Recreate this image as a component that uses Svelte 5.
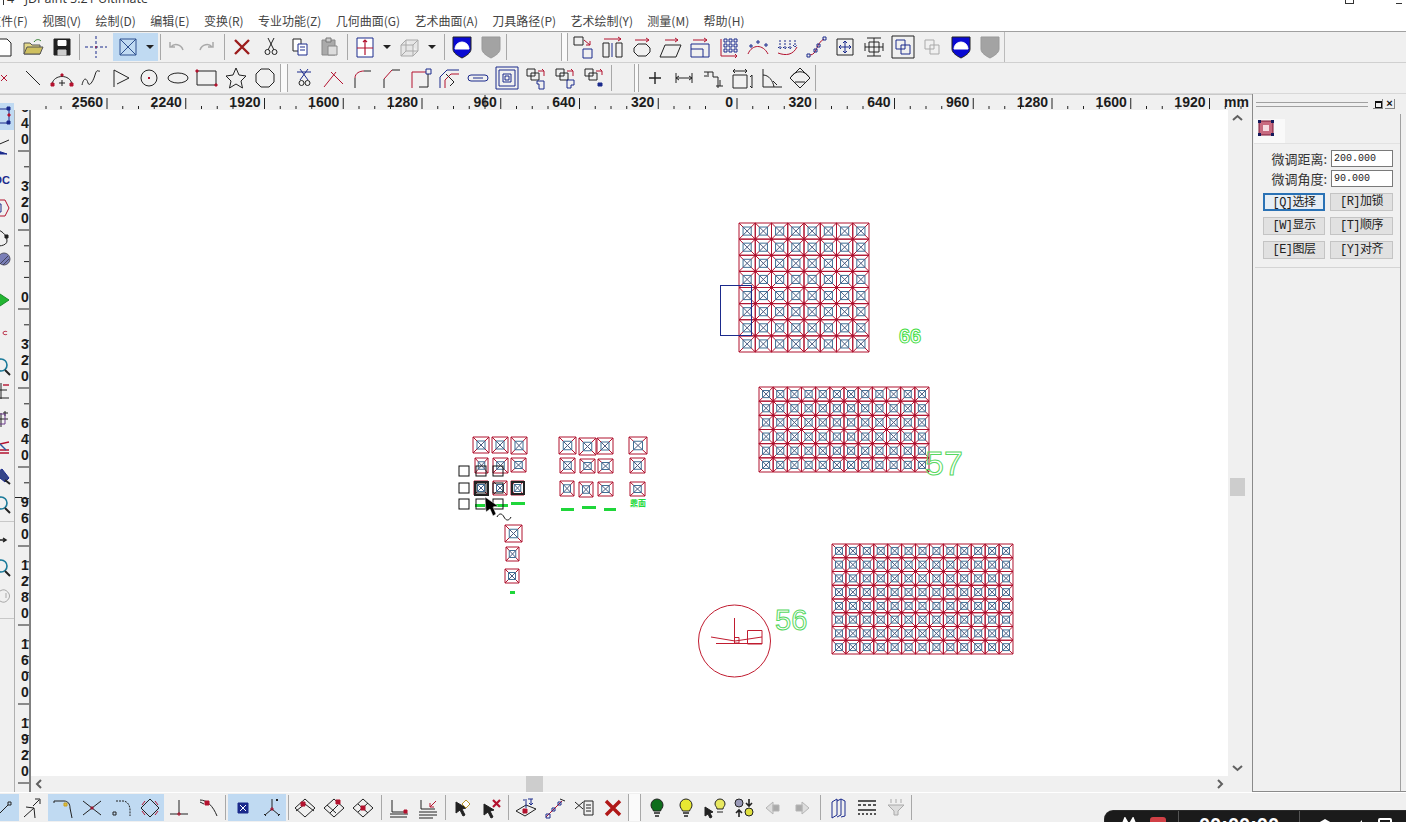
<script>
  const N = '#1b2a8c', R = '#b3122f', K = '#222', G = '#a9a9a9', B = '#2d4f8e';

  // [stroke, path, fill?, strokeWidth?], drawn in a 24x24 box
  const icons = {
    doc: [[K, 'M5 4h10l4 4v13H5z', '#fff']],
    open: [['#555', 'M3 8h6l2 2h8v9H3z', '#e4d98a'], ['#555', 'M3 19l3-7h16l-3 7z', '#cfc060'], ['#2a7a2a', 'M13 7c2-3 5-3 7-1']],
    save: [[K, 'M4 4h16v16H4z', K], ['#fff', 'M8 5.5h8v5H8z', '#fff'], ['#ccc', 'M8 15h8v5H8z', '#ccc']],
    cross: [[N, 'M1 12h22M12 1v22', 'none', 1, '3 2'], [R, 'M11 12h2']],
    xbox: [[B, 'M4 4h16v16H4zM4 4l16 16M20 4L4 20']],
    undo: [[G, 'M5 7v5h5M6 12c3-4 10-3 12 3', 'none', 1.5]],
    redo: [[G, 'M19 7v5h-5M18 12c-3-4-10-3-12 3', 'none', 1.5]],
    del: [['#9c1c1c', 'M5 5l14 14M19 5L5 19', 'none', 2.4]],
    cut: [[K, 'M9 3l6 12M15 3L9 15'], [K, 'M6 17a2.5 2.5 0 1 0 5 0a2.5 2.5 0 1 0-5 0zM13 17a2.5 2.5 0 1 0 5 0a2.5 2.5 0 1 0-5 0z']],
    copy: [[K, 'M5 4h8v12H5z', '#fff'], [N, 'M10 9h9v11h-9zM12 12h5M12 15h5', '#fff']],
    paste: [['#888', 'M5 5h13v15H5z', '#aaa'], ['#777', 'M9 3h5v4H9z', '#ccc'], ['#888', 'M11 11h9v9h-9z', '#ddd']],
    frame: [[N, 'M4 3h16v19H4z', '#fff'], [R, 'M4 13h16M12 5v15M10 7l2-2 2 2', 'none', 1.2]],
    cube: [[G, 'M3 10h12v11H3zM3 10l5-5h12v11l-5 5M15 10l5-5M8 5v11h12M8 16l-5 5', '#e6e6e6']],
    shield: [[K, 'M3 2h18v12c0 4-5 7-9 9-4-2-9-5-9-9z', '#0a0ad2'], ['#fff', 'M5 14a7 7 0 0 1 14 0z', '#fff']],
    shieldg: [['#999', 'M3 2h18v12c0 4-5 7-9 9-4-2-9-5-9-9z', '#a3a3a3']],
    a1: [[K, 'M2 2h9v8H2z'], [N, 'M11 14h9v9h-9z'], [R, 'M12 5l6 5M18 6v4h-4']],
    a2: [[K, 'M2 8h6v14H2zM15 8h6v14h-6z'], [N, 'M11 8v14'], [R, 'M3 4h17M17 2l3 2-3 2']],
    a3: [[K, 'M8 9h8l4 4v4l-4 4H8l-4-4v-4z'], [R, 'M5 5h14M16 3l3 2-3 2']],
    a4: [[K, 'M6 10h16l-5 12H1z'], [R, 'M6 5h13M16 3l3 2-3 2']],
    a5: [[N, 'M3 9h18v13H3zM3 14h12v8'], [R, 'M5 5h14M16 3l3 2-3 2']],
    a6: [[N, 'M7 4h3v3H7zM12 4h3v3h-3zM17 4h3v3h-3zM7 9h3v3H7zM12 9h3v3h-3zM17 9h3v3h-3zM7 14h3v3H7zM12 14h3v3h-3zM17 14h3v3h-3z'], [R, 'M4 4v17h16M18 19l2 2-2 2']],
    a7: [[R, 'M2 19C6 9 17 9 22 19'], [N, 'M4 10h2v2H4zM11 6h2v2h-2zM19 9h2v2h-2z']],
    a8: [[N, 'M5 5v9M3 12l2 2 2-2M10 5v9M8 12l2 2 2-2M15 5v9M13 12l2 2 2-2M20 5v7M18 10l2 2 2-2', 'none', 1, '2 1'], [R, 'M3 18c8 3 15 2 19-6']],
    a9: [[R, 'M6 20c7 0 6-12 14-16'], [N, 'M3 19h3v3H3zM10 14h3v3h-3zM13 9h3v3h-3zM19 2h3v3h-3z']],
    a10: [[K, 'M4 4h16v16H4z'], [N, 'M12 6v12M6 12h12M10 8l2-2 2 2M10 16l2 2 2-2M8 10l-2 2 2 2M16 10l2 2-2 2']],
    a11: [[K, 'M5 3h14M5 21h14M12 3v18M3 12h18M7 7h10v10H7zM3 8v8M21 8v8']],
    dup: [[K, 'M1 1h22v22H1z'], [N, 'M5 5h9v9H5zM10 10h9v9h-9z']],
    dupg: [[G, 'M5 5h9v9H5zM10 10h9v9h-9z']],

    redx: [[R, 'M9 9l6 6M15 9l-6 6']],
    line: [[K, 'M5 5l14 14']],
    arc: [[K, 'M2 18C4 8 20 8 22 18'], [K, 'M12 14v6M9 17h6'], [R, 'M1 17h3v3H1zM20 17h3v3h-3zM11 8h2v2h-2z', R]],
    spline: [[K, 'M3 19c2-9 5-6 6-2s5-1 7-8 3-3 5-4']],
    poly: [[K, 'M6 4l15 8-12 6M6 4v17']],
    circ: [[K, 'M4 12a8 8 0 1 0 16 0a8 8 0 1 0-16 0z'], [R, 'M11 11l2 2M13 11l-2 2']],
    ell: [[K, 'M2 12a10 5 0 1 0 20 0a10 5 0 1 0-20 0z']],
    rect: [[K, 'M2 5h19v14H2z'], [R, 'M1 4h2v2H1zM20 18h2v2h-2z', R]],
    star: [[K, 'M12 2l3 7 7 1-5 5 1.500 7-6.500-4-6.500 4L7 15 2 10l7-1z']],
    oct: [[K, 'M8 3h8l5 5v8l-5 5H8l-5-5V8z']],
    trim: [[N, 'M8 3l8 11M16 3L8 14M5 6h14'], [K, 'M7 17a2.500 2.500 0 1 0 5 0a2.500 2.500 0 1 0-5 0zM13 17a2.500 2.500 0 1 0 5 0a2.500 2.500 0 1 0-5 0z']],
    xcor: [[R, 'M3 21L15 6M10 6l12 12']],
    fil: [[K, 'M5 22V12'], [R, 'M5 12c0-5 5-7 9-7'], [K, 'M14 5h7']],
    cha: [[K, 'M5 22v-9M13 4h8'], [R, 'M5 13l8-9']],
    bcor: [[R, 'M4 22V6h14'], [N, 'M18 3h5v5h-5z'], [K, 'M20 8v13h-9']],
    off: [[N, 'M3 22V11l7-7h12'], [R, 'M8 22v-8l6-6h8'], [K, 'M9 8l8 8-4 4']],
    slot: [[N, 'M5 9h14a3 3 0 0 1 0 6H5a3 3 0 0 1 0-6zM7 12h10']],
    nest: [[N, 'M1 1h22v22H1zM4 4h16v16H4zM8 8h8v8H8zM10 10h4v4h-4z']],
    g1: [[K, 'M3 3h8v7H3zM7 7h8v7H7z'], [R, 'M14 5h6M18 3l2 2v5'], [N, 'M13 15h7v8h-5v-5h-2z']],
    g2: [[K, 'M3 3h8v7H3zM7 7h8v7H7z'], [R, 'M14 5h6M18 3l2 2v5'], [N, 'M14 14h7v5h-3v3h-4z']],
    g3: [[K, 'M3 3h8v7H3zM7 7h8v7H7z'], [R, 'M14 5h6M18 3l2 2v4'], [N, 'M16 17h4v3h-4z', N]],
    plus: [[K, 'M12 6v12M6 12h12', 'none', 1.4]],
    dimh: [[K, 'M4 7v10M20 7v10M4 12h16M7 10l-3 2 3 2M17 10l3 2-3 2']],
    dims: [[K, 'M3 6h9v5h5v11M7 6v3M3 10h5M15 20h7M19 14v6']],
    dimb: [[K, 'M3 9h14v13H3zM3 5h14M5 3l-2 2 2 2M15 3l2 2-2 2M22 9v13M20 11l2-2M20 20l2 2']],
    dima: [[K, 'M4 3v18h19M4 9c6 0 10 6 11 12M14 15l4 4']],
    dimd: [[K, 'M12 2l10 10-10 10L2 12z'], [K, 'M3 11c4-7 14-7 18 0M7 16h10']],

    // lower bar
    b1: [[K, 'M2 22L15 9'], [K, 'M15 6h3v3h-3z']],
    b2: [[K, 'M2 21L12 12M4 11l8 1 1 10M11 10l6-6M13 3h5v5']],
    b3: [[K, 'M3 5h10c4 0 6 3 6 7l2 10M3 5v2'], ['#c9a020', 'M13 7h3v3h-3z', '#d9c040']],
    b4: [[K, 'M3 5l18 14M21 5L3 19'], [R, 'M11 11h2v2h-2z']],
    b5: [[K, 'M7 5h7c4 0 7 4 7 9v6', 'none', 1, '2 1'], [K, 'M4 16h3v3H4z']],
    b6: [[K, 'M12 3l9 9-9 9-9-9z'], [R, 'M7 5l-3 4M17 5l3 4M7 19l-3-4M17 19l3-4']],
    b7: [[K, 'M12 4v14M3 18h18'], [R, 'M11 17h2v2h-2z']],
    b8: [[K, 'M4 4c7 0 13 6 17 16M4 6l4 2'], [R, 'M9 5h4v4H9z', R]],
    b9: [[N, 'M7 7h10v10H7z', N], ['#fff', 'M9 9l6 6M15 9l-6 6']],
    b10: [[K, 'M12 3v10M12 13l-7 6M12 13l7 6M4 18l2 2M20 18l-2 2'], [K, 'M16 3l2 2M18 3l-2 2'], [R, 'M11 12h2v2h-2z']],
    d1: [[K, 'M12 3l10 9-10 9-10-9z'], [K, 'M3 15l9-7 9 7'], [R, 'M8 6h4v4H8z', R]],
    d2: [[K, 'M12 3l10 9-10 9-10-9z'], [K, 'M5 9l9 8M8 17l8-8'], [R, 'M14 4h4v4h-4z', R]],
    d3: [[K, 'M12 3l10 9-10 9-10-9zM7 8l10 9M7 16l10-9'], [R, 'M10 10h4v4h-4z', R]],
    e1: [[K, 'M5 4v12h12M3 18h18M3 21h17'], [R, 'M17 14h3v3h-3z', R]],
    e2: [[K, 'M5 4v9h14M3 16h18M3 19h18M3 22h14'], [R, 'M20 5l-6 6M14 7v4h4']],
    s1: [[K, 'M6 6l10 6-4 1 3 6-2 1-3-6-4 3z', K], ['#b8962a', 'M16 4l4 4-4 4-4-4z', '#fff']],
    s2: [[K, 'M5 8l10 6-4 1 3 6-2 1-3-6-4 3z', K], [R, 'M14 4l7 7M21 4l-7 7', 'none', 2.2]],
    h1: [[K, 'M2 15l10-6 10 4-11 7z'], [R, 'M9 13h4v4H9z', R], [N, 'M12 12V3M9 4h2M14 3h5M17 3v6M15 7l2 2 2-2']],
    h2: [[R, 'M3 21L19 5'], [N, 'M3 18h4v4H3zM9 12h3v3H9zM15 6h3v3h-3z'], [K, 'M17 3l5 2']],
    h3: [[K, 'M3 6l8 7M11 6l-8 7M12 5h9v14h-9zM14 9h5M14 12h5M14 15h5']],
    h4: [['#b01818', 'M5 5l14 14M19 5L5 19', 'none', 3.4]],
    g5: [[K, 'M6 9a6 6 0 1 1 12 0c0 3-2 4-2.500 6h-7C8 13 6 12 6 9z', '#0e6e1c'], [K, 'M9 17h6M10 20h4', 'none', 1.5]],
    g6: [[K, 'M6 9a6 6 0 1 1 12 0c0 3-2 4-2.500 6h-7C8 13 6 12 6 9z', '#e8e832'], [K, 'M9 17h6M10 20h4', 'none', 1.5]],
    g7: [[K, 'M2 11l8 5-3 1 2 4-2 1-2-4-3 2z', K], [K, 'M12 8a5 5 0 1 1 10 0c0 2-2 3-2 5h-6c0-2-2-3-2-5z', '#e8e860'], [K, 'M14 16h6']],
    g8: [[K, 'M3 7a4 4 0 1 0 8 0a4 4 0 1 0-8 0z', '#9a9ab8'], [K, 'M13 16a4 4 0 1 0 8 0a4 4 0 1 0-8 0z', '#e0e040'], [K, 'M17 3v7M14 7l3 3 3-3M7 21v-7M4 17l3-3 3 3', 'none', 1.6]],
    ga: [['#b5b5b5', 'M12 6l-7 6 7 6z', '#ddd'], ['#b5b5b5', 'M12 9h6v6h-6z', '#aaa']],
    gb: [['#b5b5b5', 'M12 6l7 6-7 6z', '#ddd'], ['#b5b5b5', 'M6 9h6v6H6z', '#aaa']],
    p1: [[N, 'M6 6l5-3v16l-5 3zM11 5l4-2v16l-4 2M15 3l4 2v15l-4 1']],
    p2: [[K, 'M3 5h18M3 14h18', 'none', 1.6], [K, 'M3 9h18', 'none', 1.6, '3 2'], [K, 'M3 18h18', 'none', 1.6, '2 2']],
    p3: [['#aaa', 'M4 9h16l-6 6v4h-4v-4zM7 3v4M12 3v4M17 3v4', '#ddd']],

    // left column, clipped by the window edge
    l1: [[N, 'M-3 6h17v14H-3z'], [R, 'M13 11h2v2h-2z', R], ['#2a9a5a', 'M2 11h2v2H2z', '#2a9a5a'], [N, 'M12 4h3v3h-3zM12 18h3v3h-3z', N]],
    l2: [[K, 'M0 10L14 4'], [N, 'M-4 13l10 3 6 2-8 0-3 6z', N]],
    l3: [[R, 'M-4 4h14l4 8-4 8H-4z'], [N, 'M-2 8h8v8h-8z']],
    l4: [[K, 'M-2 3c8 0 14 6 14 12 0 5-10 6-14 4'], [K, 'M10 9h3v3h-3z', K]],
    l5: [['#556', 'M3 6a6 6 0 1 0 12 0a6 6 0 1 0-12 0z', '#7a7fb8'], ['#334', 'M5 11l8-8M8 12l6-6', 'none', .8]],
    l6: [['#1a8a2a', 'M2 6l12 8-12 8z', '#22b531']],
    l7: [[R, 'M8 13c0-2 4-2 4-1M8 13c0 2 4 2 4 1']],
    mag: [['#1a7a9a', 'M0 10a6 6 0 1 0 12 0a6 6 0 1 0-12 0z', 'none', 1.6], [K, 'M10 15l5 5', 'none', 2]],
    l8: [[K, 'M6 3v16M0 10h12M2 18h12'], [R, 'M8 5l6 0', 'none', 1.4]],
    l9: [[K, 'M6 5v14M1 11h12M10 3v5M8 5h5'], ['#6a3a8a', 'M2 6h8v10H2z']],
    l10: [[R, 'M0 9l14-3M0 14h14M3 17h11', 'none', 1.4], ['#2a5aa0', 'M5 8l6 6', 'none', 1.4]],
    l11: [[N, 'M0 9l7-5 7 9-4 4z', '#334488'], [K, 'M10 15l5 4', 'none', 2]],
    l12: [[K, 'M4 12h6M8 10l3 2-3 2', 'none', 1.5]],
    l13: [[G, 'M5 8a6 6 0 1 1 0 10M11 10v5']]
  };

  const sep = (w) => ({ sep: w });
  const gap = (w) => ({ gap: w });
  const grip = (w) => ({ grip: w });
  const on = (i) => ({ i, on: true });
  const drop = { i: 'caret', narrow: true };

  const bar1 = ['doc', 'open', 'save', sep(5), 'cross', gap(3), { i: 'xbox', on: true }, { i: 'caret', narrow: true, on: true }, sep(4),
    'undo', 'redo', sep(7), 'del', 'cut', 'copy', 'paste', sep(7), 'frame', drop, 'cube', drop, sep(7), 'shield', 'shieldg', sep(1), gap(54), grip(7),
    'a1', 'a2', 'a3', 'a4', 'a5', 'a6', 'a7', 'a8', 'a9', 'a10', 'a11', 'dup', 'dupg', 'shield', 'shieldg'];
  const bar2 = ['redx', 'line', 'arc', 'spline', 'poly', 'circ', 'ell', 'rect', 'star', 'oct', grip(8),
    'trim', 'xcor', 'fil', 'cha', 'bcor', 'off', 'slot', 'nest', 'g1', 'g2', 'g3', sep(5), gap(20), grip(5),
    'plus', 'dimh', 'dims', 'dimb', 'dima', 'dimd', sep(1)];
  const bar3 = [on('b1'), 'b2', on('b3'), on('b4'), on('b5'), on('b6'), 'b7', 'b8', sep(6), on('b9'), on('b10'), sep(4),
    'd1', 'd2', 'd3', sep(7), 'e1', 'e2', sep(5), 's1', 's2', sep(6), 'h1', 'h2', 'h3', 'h4', grip(13),
    'g5', 'g6', 'g7', 'g8', 'ga', 'gb', sep(7), 'p1', 'p2', 'p3', sep(1)];

  const leftTools = [
    { i: 'l1', on: true }, { i: 'l2', m: 9 }, { t: 'DC', m: 8 }, { i: 'l3', m: 4 }, { i: 'l4', m: 6 }, { i: 'l5', m: 3 },
    { i: 'l6', m: 9 }, { i: 'l7', m: 10 }, { i: 'mag', m: 11 }, { i: 'l8', m: 1 }, { i: 'l9', m: 4 }, { i: 'l10', m: 4 },
    { i: 'l11', m: 5 }, { i: 'mag', m: 4 }, { line: true, m: 4 }, { i: 'l12', m: 6 }, { i: 'mag', m: 4 }, { i: 'l13', m: 3 }
  ];

  const menus = ['文件(F)', '视图(V)', '绘制(D)', '编辑(E)', '变换(R)', '专业功能(Z)', '几何曲面(G)', '艺术曲面(A)', '刀具路径(P)', '艺术绘制(Y)', '测量(M)', '帮助(H)'];

  const hLabels = [2560, 2240, 1920, 1600, 1280, 960, 640, 320, 0, 320, 640, 960, 1280, 1600, 1920];
  const hTicks = hLabels.map((label, k) => ({ label, x: 107 + k * 78.75 }));
  const vTicks = [640, 320, 0, 320, 640, 960, 1280, 1600, 1920].map((label, k) => ({ digits: String(label).split(''), y: 151 + k * 79 - 110 }));

  const grids = [
    { x: 739, y: 223, w: 130, h: 129, cols: 8, rows: 8 },
    { x: 759, y: 387, w: 170, h: 85, cols: 12, rows: 6 },
    { x: 832, y: 544, w: 181, h: 110, cols: 13, rows: 8 }
  ];
  function cellsOf(g) {
    const out = [];
    for (let r = 0; r < g.rows; r++)
      for (let c = 0; c < g.cols; c++)
        out.push({ x: g.x + (c * g.w) / g.cols, y: g.y + (r * g.h) / g.rows, w: g.w / g.cols, h: g.h / g.rows, inner: r > 0 && c > 0 });
    return out;
  }
  const gridCells = grids.flatMap(cellsOf);

  // loose squares: left, top, right, bottom
  const loose = [
    [473, 437, 489, 453], [492, 437, 508, 453], [511, 437, 527, 454],
    [475, 458, 488, 473], [493, 458, 508, 473], [511, 458, 526, 472],
    [474, 481, 488, 495], [493, 481, 507, 495], [511, 481, 524, 495],
    [505, 525, 522, 542], [506, 547, 519, 561], [505, 569, 519, 583],
    [559, 437, 576, 454], [579, 438, 596, 455], [597, 438, 613, 454],
    [560, 458, 575, 473], [580, 459, 595, 473], [598, 459, 613, 473],
    [560, 481, 574, 496], [579, 482, 593, 497], [598, 482, 613, 496],
    [629, 437, 647, 454], [630, 458, 645, 473], [630, 482, 645, 496]
  ].map(([l, t, r, b]) => ({ x: l, y: t, w: r - l, h: b - t }));

  const greens = [[475, 505, 485, 3], [495, 505, 508, 3], [511, 503, 525, 3], [561, 509, 574, 3], [582, 507, 596, 3], [604, 509, 616, 3], [510, 592, 515, 3]];
  const handles = [[464, 471], [481, 471], [498, 471], [464, 488], [481, 488], [498, 488], [464, 504], [481, 504], [498, 504]];
  const panelBtns = ['[Q]选择', '[R]加锁', '[W]显示', '[T]顺序', '[E]图层', '[Y]对齐'];
</script>

{#snippet glyph(name, size = 24)}
  <svg class="glyph" width={size} height={size} viewBox="0 0 24 24">
    {#each icons[name] as [stroke, d, fill, sw, dash]}
      <path {d} {stroke} fill={fill || 'none'} stroke-width={sw || 1} stroke-dasharray={dash} />
    {/each}
  </svg>
{/snippet}

{#snippet toolbar(items)}
  {#each items as it}
    {#if typeof it === 'string'}
      <span class="tool">{@render glyph(it)}</span>
    {:else if it.sep}
      <span class="sep" style="width:{it.sep}px"></span>
    {:else if it.gap}
      <span style="width:{it.gap}px"></span>
    {:else if it.grip}
      <span class="grip" style="width:{it.grip}px"></span>
    {:else if it.narrow}
      <span class="tool narrow" class:on={it.on}><i class="caret"></i></span>
    {:else}
      <span class="tool" class:on={it.on}>{@render glyph(it.i)}</span>
    {/if}
  {/each}
{/snippet}

<div class="win">
  <div class="title"><span class="title-mark"></span><span class="title-text">4 - JDPaint 5.21 Ultimate</span>
    <span class="winbtns"><i class="restore"></i><i class="close"></i></span>
  </div>

  <nav class="menu">
    {#each menus as m}<span>{m}</span>{/each}
  </nav>

  <div class="bar bar1">
    <div class="strip">{@render toolbar(bar1)}</div>
  </div>
  <div class="bar bar2">
    <div class="strip">{@render toolbar(bar2)}</div>
  </div>

  <div class="body">
    <div class="work">
      <svg class="hruler" width="1252" height="16">
        {#each hTicks as t}
          <path d="M{t.x} 3V14M{t.x + 15.75} 11V14M{t.x + 31.5} 11V14M{t.x + 47.25} 11V14" stroke="#222" fill="none" />
          <text x={t.x - 4} y="12" text-anchor="end">{t.label}</text>
        {/each}
        <text x="1224" y="12">mm</text>
        <path d="M485 0V14" stroke="#222" />
        <path d="M46 11V14M61 11V14M76 11V14" stroke="#222" />
      </svg>

      <div class="main">
        <div class="lefttools">
          {#each leftTools as t}
            {#if t.line}
              <div class="lline" style="margin-top:{t.m}px"></div>
            {:else if t.t}
              <div class="ltool dc" style="margin-top:{t.m}px">{t.t}</div>
            {:else}
              <div class="ltool" class:on={t.on} style="margin-top:{t.m || 0}px">{@render glyph(t.i)}</div>
            {/if}
          {/each}
        </div>

        <svg class="vruler" width="14" height="682">
          {#each vTicks as t}
            <path d="M3 {t.y}H14M9 {t.y + 15.800}H14M9 {t.y + 31.600}H14M9 {t.y + 47.400}H14" stroke="#222" fill="none" />
            {#each t.digits as d, k}
              <text x="10" y={t.y - 7 - (t.digits.length - 1 - k) * 16} text-anchor="middle">{d}</text>
            {/each}
          {/each}
          <path d="M0 387.500H7V392" stroke="#222" fill="none" />
        </svg>

        <div class="view">
          <div class="view-top">
            <svg class="canvas" viewBox="31 110 1197 666" width="1197" height="666">
              <defs>
                <g id="cell">
                  <path d="M0 0H1V1H0ZM0 0L.26 .26M1 0L.74 .26M0 1L.26 .74M1 1L.74 .74" stroke="#b0122f" fill="none" vector-effect="non-scaling-stroke" />
                  <path d="M.25 .25H.75V.75H.25Z" stroke="#3f7096" fill="none" vector-effect="non-scaling-stroke" />
                  <path d="M.25 .25L.75 .75M.75 .25L.25 .75" stroke="#4a5c82" fill="none" vector-effect="non-scaling-stroke" />
                </g>
              </defs>

              {#each gridCells as c}
                <use href="#cell" transform="translate({c.x} {c.y}) scale({c.w} {c.h})" />
              {/each}
              {#each gridCells as c}
                {#if c.inner}<circle cx={c.x} cy={c.y} r="1.300" fill="#b0102f" />{/if}
              {/each}
              {#each loose as c}
                <use href="#cell" transform="translate({c.x} {c.y}) scale({c.w} {c.h})" />
              {/each}

              <rect x="720.500" y="285.500" width="31" height="50" fill="none" stroke={N} />

              <text class="num small" x="899" y="343">66</text>
              <text class="num big" x="925" y="475">57</text>
              <text class="num mid" x="775" y="630">56</text>
              <text class="tiny" x="630" y="506">鼎面</text>

              {#each greens as [x1, y, x2, h]}
                <rect x={x1} y={y - 1} width={x2 - x1} height={h} fill="#1fd63a" />
              {/each}

              <circle cx="734.500" cy="641" r="36" fill="none" stroke="#c01c30" />
              <path d="M734.500 618V642M716 643.500H762M711 637L735 641L762 637M734.500 637.500H739V643H734.500ZM747.500 630.500H762V644H747.500Z" fill="none" stroke="#c01c30" />

              {#each handles as [x, y], k}
                <rect x={x - 5} y={y - 5} width="10" height="10" fill={k % 3 === 0 ? '#fff' : 'none'} stroke="#111" />
              {/each}
              <rect x="475" y="482" width="13" height="13" fill="none" stroke="#222" stroke-width="2" />
              <rect x="512" y="482" width="12" height="12" fill="none" stroke="#222" stroke-width="2" />

              <path d="M485 497L486 512L490 509L493 516L496 514L493 507L498 506Z" fill="#000" stroke="#fff" stroke-width=".5" />
              <path d="M497 517c2-4 5-4 7 0s5 4 7 0" fill="none" stroke="#111" />
            </svg>
            <div class="vscroll">
              <svg class="chev" width="19" height="16" viewBox="0 0 19 16"><path d="M5 10l4.500-4 4.500 4" /></svg>
              <div class="spacer" style="height:352px"></div>
              <div class="vthumb"></div>
              <div class="grow"></div>
              <svg class="chev" width="19" height="16" viewBox="0 0 19 16"><path d="M5 6l4.500 4 4.500-4" /></svg>
            </div>
          </div>
          <div class="hscroll">
            <svg class="chev" width="16" height="16" viewBox="0 0 16 16"><path d="M10 4l-4 4 4 4" /></svg>
            <div class="spacer" style="width:479px"></div>
            <div class="hthumb"></div>
            <div class="grow"></div>
            <svg class="chev" width="16" height="16" viewBox="0 0 16 16"><path d="M6 4l4 4-4 4" /></svg>
          </div>
        </div>
      </div>
    </div>

    <aside class="panel">
      <div class="panel-head">
        <div class="panel-grip"></div>
        <i class="pbtn box"></i><i class="pbtn x">×</i>
      </div>
      <div class="tabs">
        <div class="tab">
          <svg width="16" height="16" viewBox="0 0 16 16">
            <rect x="1" y="1" width="14" height="14" fill="#c86a80" stroke="#7a1836" />
            <rect x="5" y="5" width="6" height="6" fill="#f6dbe2" />
            <path d="M0 0h3v3H0zM13 0h3v3h-3zM0 13h3v3H0zM13 13h3v3h-3z" fill="#141a5c" />
          </svg>
        </div>
      </div>
      <div class="form">
        <div class="field"><label for="d">微调距离:</label><input id="d" value="200.000" /></div>
        <div class="field"><label for="a">微调角度:</label><input id="a" value="90.000" /></div>
        <div class="btns">
          {#each panelBtns as b, k}
            <button class:focus={k === 0}>{b}</button>
          {/each}
        </div>
      </div>
      <div class="rule"></div>
    </aside>
  </div>

  <div class="bar bar3">
    <div class="strip">{@render toolbar(bar3)}</div>
  </div>

  <div class="recorder">
    <div class="rec-a">
      <svg width="18" height="12" viewBox="0 0 18 12"><path d="M1 12L5 2l4 7 4-7 4 10" fill="none" stroke="#fff" stroke-width="2.500" /></svg>
      <i class="rec-dot"></i>
    </div>
    <div class="rec-time">00:00:00</div>
    <div class="rec-c">
      <svg width="26" height="12" viewBox="0 0 26 12"><path d="M1 8L13 1l12 7v5H1z" fill="#fff" /></svg>
      <svg width="12" height="12" viewBox="0 0 12 12"><path d="M10 2v10H1z" fill="#fff" /></svg>
      <i class="rec-sq"></i>
    </div>
  </div>
</div>

<style>
  :global(body) {
    margin: 0;
    overflow: hidden;
    background: #f0f0f0;
  }

  .win {
    position: relative;
    width: 1406px;
    height: 822px;
    overflow: hidden;
    display: flex;
    flex-direction: column;
    font-family: "Noto Sans CJK SC", "Liberation Sans", sans-serif;
    color: #333;
    background: #f0f0f0;
  }

  .title {
    height: 10px;
    flex: none;
    background: #fff;
    display: flex;
    align-items: flex-end;
    overflow: hidden;
    padding-left: 3px;
    gap: 3px;
  }
  .title-mark {
    width: 1px;
    height: 5px;
    background: #333;
    align-self: flex-start;
  }
  .title-text {
    font: 12.5px/20px "Open Sans", "Liberation Sans", sans-serif;
    margin-bottom: 1px;
    color: #333;
    white-space: nowrap;
  }
  .winbtns {
    margin-left: auto;
    align-self: flex-start;
    display: flex;
    gap: 42px;
    padding-right: 4px;
  }
  .restore {
    display: block;
    width: 7px;
    height: 3px;
    border: solid #333;
    border-width: 0 1px 1px 1px;
  }
  .close {
    display: block;
    width: 6px;
    height: 3px;
    border-bottom: 1px solid #333;
  }

  .menu {
    height: 21px;
    flex: none;
    background: #fff;
    border-bottom: 1px solid #a0a0a0;
    display: flex;
    align-items: center;
    gap: 14.4px;
    font-size: 12px;
    color: #444;
    white-space: nowrap;
  }
  .menu span:first-child {
    margin-left: -11px;
  }

  .bar {
    flex: none;
    display: flex;
    background: #f0f0f0;
    overflow: hidden;
  }
  .bar1 {
    height: 30px;
    border-bottom: 1px solid #d0d0d0;
  }
  .bar2 {
    height: 30px;
    border-bottom: 1px solid #d8d8d8;
  }
  .bar3 {
    height: 29px;
    border-top: 1px solid #fff;
  }
  .strip {
    display: flex;
    align-items: stretch;
    margin-left: -11px;
    padding: 1px 0;
  }
  .bar3 .strip {
    margin-left: -10px;
  }
  .bar1 .strip {
    border-right: 1px solid #bbb;
  }

  .tool {
    width: 29px;
    flex: none;
    display: flex;
    align-items: center;
    justify-content: center;
  }
  .tool.narrow {
    width: 16px;
  }
  .tool.on {
    background: #c0daf2;
  }
  .caret {
    display: block;
    border: 4px solid transparent;
    border-top: 4px solid #222;
    border-bottom: 0;
    width: 0;
    height: 0;
  }
  .sep {
    flex: none;
    position: relative;
  }
  .sep::after {
    content: "";
    position: absolute;
    top: 1px;
    bottom: 1px;
    left: 50%;
    width: 1px;
    background: #a8a8a8;
  }
  .grip {
    flex: none;
    box-sizing: border-box;
    border-left: 1px solid #a8a8a8;
    border-right: 1px solid #a8a8a8;
    background: #fafafa;
    margin: 0 1px;
  }
  .glyph {
    display: block;
    overflow: visible;
  }

  .body {
    flex: 1;
    display: flex;
    min-height: 0;
  }
  .work {
    width: 1252px;
    flex: none;
    display: flex;
    flex-direction: column;
  }

  .hruler,
  .vruler {
    display: block;
    flex: none;
    background: #f0f0f0;
  }
  .hruler text,
  .vruler text {
    font: bold 14px "Liberation Sans", sans-serif;
    fill: #1c1c1c;
  }
  .hruler {
    border-top: 1px solid #c8c8c8;
    box-sizing: border-box;
  }

  .main {
    flex: 1;
    display: flex;
    min-height: 0;
    position: relative;
  }
  .lefttools {
    width: 14px;
    height: 515px;
    flex: none;
    align-self: flex-start;
    margin-top: -10px;
    padding-top: 3px;
    background: #f0f0f0;
    border-bottom: 1px solid #c8c8c8;
    overflow: hidden;
    position: relative;
  }
  .ltool {
    height: 24px;
    width: 14px;
  }
  .ltool .glyph {
    margin-left: -5px;
  }
  .ltool.on {
    background: #c0daf2;
    height: 27px;
    margin-bottom: -3px;
  }
  .ltool.dc {
    font: bold 11px/24px "Liberation Sans", sans-serif;
    color: #1b2a8c;
    text-indent: -6px;
    white-space: nowrap;
  }
  .lline {
    height: 1px;
    background: #c8c8c8;
  }
  .vruler {
    border-left: 1px solid #b0b0b0;
    border-right: 2px solid #808080;
    position: relative;
  }

  .view {
    flex: 1;
    display: flex;
    flex-direction: column;
    min-width: 0;
  }
  .view-top {
    display: flex;
    flex: none;
  }
  .canvas {
    display: block;
    flex: none;
    background: #fff;
  }
  .num {
    font-family: "Liberation Sans", sans-serif;
    fill: none;
    stroke: #56d860;
    stroke-width: 1;
  }
  .num.small {
    font-size: 20px;
    font-weight: bold;
    stroke: #44dd44;
  }
  .num.big {
    font-size: 34px;
  }
  .num.mid {
    font-size: 29px;
  }
  .tiny {
    font-size: 8px;
    font-weight: bold;
    fill: #22d93a;
  }

  .vscroll {
    width: 19px;
    flex: none;
    display: flex;
    flex-direction: column;
    align-items: center;
    background: #f0f0f0;
  }
  .hscroll {
    width: 1197px;
    height: 16px;
    display: flex;
    align-items: center;
    background: #f0f0f0;
  }
  .chev {
    display: block;
    flex: none;
  }
  .chev path {
    fill: none;
    stroke: #606060;
    stroke-width: 2;
  }
  .grow {
    flex: 1;
  }
  .vthumb {
    width: 15px;
    height: 18px;
    background: #cdcdcd;
  }
  .hthumb {
    width: 17px;
    height: 16px;
    background: #cdcdcd;
  }

  .panel {
    flex: 1;
    box-sizing: border-box;
    border-left: 1px solid #8a8a8a;
    border-bottom: 1px solid #8a8a8a;
    position: relative;
  }
  .panel-head {
    height: 20px;
    display: flex;
    align-items: center;
    padding: 0 11px 0 3px;
    gap: 2px;
  }
  .panel-grip {
    flex: 1;
    height: 3px;
    border-top: 1px solid #a0a0a0;
    border-bottom: 1px solid #a0a0a0;
    margin-right: 3px;
  }
  .pbtn {
    width: 10px;
    height: 10px;
    display: block;
    box-sizing: border-box;
    border-right: 1px solid #888;
    border-bottom: 1px solid #888;
    font: bold 11px/9px "Liberation Sans", sans-serif;
    text-align: center;
    color: #111;
  }
  .pbtn.box::before {
    content: "";
    display: block;
    width: 5px;
    height: 4px;
    margin: 2px 0 0 2px;
    border: 1px solid #111;
    border-top-width: 2px;
  }
  .tabs {
    height: 24px;
    margin: 5px 5px 0 1px;
    border-bottom: 1px solid #e2e2e2;
    display: flex;
  }
  .tab {
    width: 31px;
    background: #f9f9f9;
    display: flex;
    justify-content: center;
    padding: 1px 7px 0 0;
    box-sizing: border-box;
  }
  .form {
    padding: 6px 0 0 10px;
    width: 130px;
  }
  .field {
    display: flex;
    justify-content: flex-end;
    align-items: center;
    gap: 4px;
    height: 17px;
    margin-bottom: 3px;
  }
  .field label {
    font-size: 13px;
    line-height: 17px;
    color: #333;
    white-space: nowrap;
  }
  .field input {
    width: 62px;
    height: 17px;
    box-sizing: border-box;
    border: 1px solid #7a7a7a;
    padding: 0 2px;
    font: 10px "Liberation Mono", monospace;
    color: #222;
    background: #fff;
    outline: none;
    flex: none;
  }
  .btns {
    display: grid;
    grid-template-columns: 62px 63px;
    column-gap: 5px;
    row-gap: 6px;
    margin-top: 6px;
  }
  .btns button {
    height: 18px;
    padding: 0;
    background: #e1e1e1;
    border: 1px solid #c4c4c4;
    border-radius: 0;
    font: 12px/16px "Liberation Mono", "Noto Sans CJK SC", monospace;
    letter-spacing: -0.5px;
    color: #222;
  }
  .btns button.focus {
    background: #e6eef5;
    border: 2px solid #2a72b5;
  }
  .rule {
    height: 1px;
    background: #d4d4d4;
    margin: 8px 6px 0 2px;
  }
  .panel::after {
    content: "";
    position: absolute;
    top: 20px;
    bottom: 0;
    right: 5px;
    width: 1px;
    background: #a0a0a0;
  }

  .recorder {
    position: absolute;
    left: 1105px;
    top: 811px;
    width: 320px;
    height: 30px;
    background: #1b1b1b;
    border-radius: 8px;
    display: flex;
    color: #fff;
    box-shadow: 0 0 0 1px #2a2a2a;
  }
  .rec-a {
    width: 74px;
    box-sizing: border-box;
    border-right: 1px solid #555;
    display: flex;
    padding: 6px 0 0 15px;
    gap: 12px;
  }
  .rec-dot {
    display: block;
    width: 16px;
    height: 14px;
    border-radius: 3px;
    background: #d04046;
  }
  .rec-time {
    width: 121px;
    box-sizing: border-box;
    border-right: 1px solid #555;
    font: bold 20px/24px "Liberation Sans", sans-serif;
    padding: 2px 0 0 20px;
  }
  .rec-c {
    display: flex;
    gap: 14px;
    padding: 7px 0 0 12px;
  }
  .rec-sq {
    display: block;
    width: 10px;
    height: 12px;
    border: 2px solid #fff;
    border-radius: 2px;
  }
</style>
